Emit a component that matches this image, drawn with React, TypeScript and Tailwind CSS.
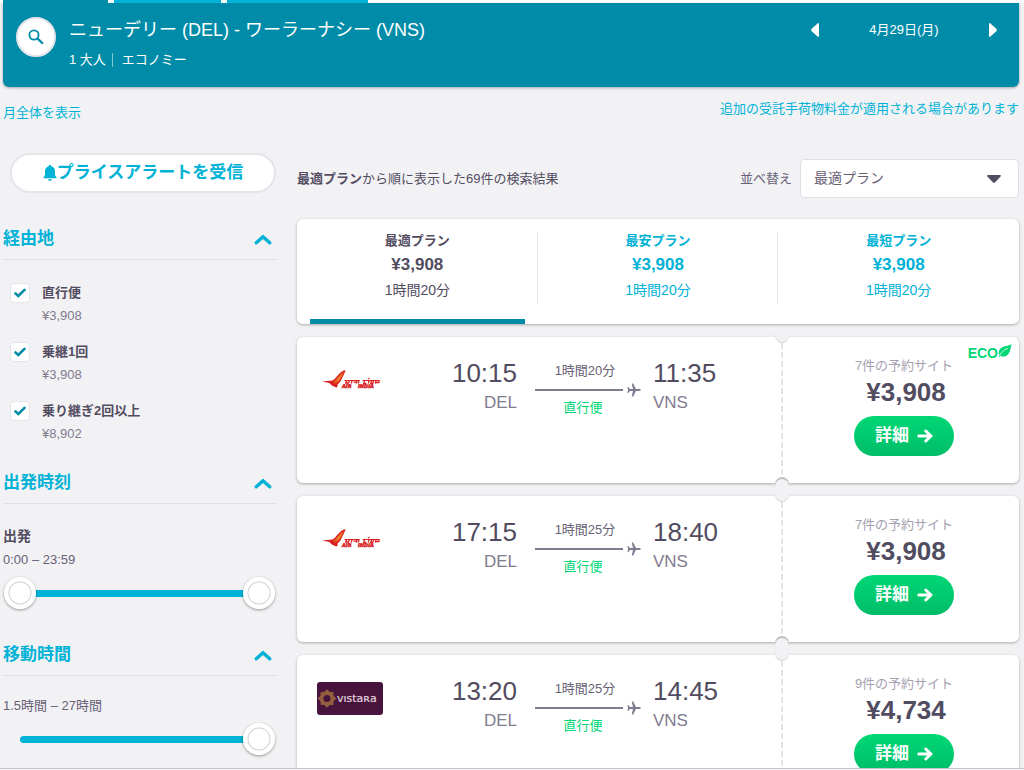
import { useState } from 'react';

const stops = [
  { id: 'direct', label: '直行便', price: '¥3,908' },
  { id: 'one', label: '乗継1回', price: '¥3,908' },
  { id: 'two', label: '乗り継ぎ2回以上', price: '¥8,902' },
];

const plans = [
  { id: 'best', label: '最適プラン', price: '¥3,908', duration: '1時間20分' },
  { id: 'cheapest', label: '最安プラン', price: '¥3,908', duration: '1時間20分' },
  { id: 'fastest', label: '最短プラン', price: '¥3,908', duration: '1時間20分' },
];

const flights = [
  { airline: 'airindia', depart: '10:15', arrive: '11:35', duration: '1時間20分', sites: '7件の予約サイト', price: '¥3,908', eco: true },
  { airline: 'airindia', depart: '17:15', arrive: '18:40', duration: '1時間25分', sites: '7件の予約サイト', price: '¥3,908', eco: false },
  { airline: 'vistara', depart: '13:20', arrive: '14:45', duration: '1時間25分', sites: '9件の予約サイト', price: '¥4,734', eco: false },
];

const rangeClass =
  'block h-8 w-full appearance-none bg-transparent outline-none [&::-webkit-slider-thumb]:pointer-events-auto [&::-webkit-slider-thumb]:h-8 [&::-webkit-slider-thumb]:w-8 [&::-webkit-slider-thumb]:cursor-pointer [&::-webkit-slider-thumb]:appearance-none [&::-webkit-slider-thumb]:rounded-full [&::-webkit-slider-thumb]:bg-[radial-gradient(circle,#ffffff_10px,#d0cdd8_11px,#ffffff_12px)] [&::-webkit-slider-thumb]:shadow-[0_1px_3px_rgba(0,0,0,0.4)]';

function SearchIcon() {
  return (
    <svg viewBox="0 0 16 16" className="h-4 w-4" fill="none" stroke="#008ca8">
      <circle cx="6" cy="6" r="4.6" strokeWidth="1.8" />
      <path d="M9.6 9.6 14.2 14" strokeWidth="2.4" strokeLinecap="round" />
    </svg>
  );
}

function BellIcon() {
  return (
    <svg viewBox="0 0 14 16" className="h-4 w-3.5" fill="currentColor">
      <path d="M7 0c.8 0 1.300.5 1.300 1.200C10.800 1.800 12 3.700 12 6v3.500c0 1 .5 1.700 1.400 2.600.5.500.200 1.100-.4 1.100H1c-.6 0-.9-.6-.4-1.100C1.500 11.200 2 10.500 2 9.500V6c0-2.300 1.200-4.200 3.700-4.800C5.700.5 6.200 0 7 0Z" />
      <path d="M5 14.200h4c-.2 1-1 1.600-2 1.600s-1.800-.6-2-1.600Z" />
    </svg>
  );
}

function ChevronUp() {
  return (
    <svg viewBox="0 0 18 11" className="h-[11px] w-[18px]" fill="none" stroke="#00b2d6" strokeWidth="3.4" strokeLinecap="round" strokeLinejoin="miter">
      <path d="M2.300 8.800 9 2.800l6.700 6" />
    </svg>
  );
}

function PlaneIcon() {
  return (
    <svg viewBox="0 0 14 14" className="h-3.5 w-3.5" fill="#817b8f">
      <path d="M13.800 7c0 .6-.8.9-1.600.9H8.900L6.200 13.600H4.700l1.300-5.700H3L1.600 9.700H.3L1.200 7 .3 4.300h1.300L3 6.100h3L4.700.4h1.500l2.700 5.700h3.300c.8 0 1.600.3 1.600.9Z" />
    </svg>
  );
}

function LeafIcon() {
  return (
    <svg viewBox="0 0 14 14" className="h-3.5 w-3.5">
      <path d="M13.800 0c-1.500 1.300-3.600 1.500-6 2C4 2.900 1.300 4.800.8 7.900c-.2 1.300.1 2.400.5 3.200L.6 12.600l1 .4.700-1.100c3 1.300 6.400.6 8.300-2.200C12.600 6.900 12.500 2.900 13.800 0Z" fill="#00d775" />
      <path d="M1.600 11.800C3 8.500 5.500 6 9.800 4.300" fill="none" stroke="#ffffff" strokeWidth="0.8" />
    </svg>
  );
}

function ArrowIcon() {
  return (
    <svg viewBox="0 0 16 14" className="h-3.5 w-4" fill="none" stroke="currentColor" strokeWidth="3" strokeLinecap="round" strokeLinejoin="round">
      <path d="M1.800 7h12M8.800 2l5.200 5-5.200 5" />
    </svg>
  );
}

function AirIndiaLogo() {
  return (
    <svg viewBox="0 0 66 32" className="h-8 w-[66px]" role="img" aria-label="Air India">
      <defs>
        <linearGradient id="wing" x1="0" y1="1" x2="1" y2="0">
          <stop offset="0" stopColor="#e2401f" />
          <stop offset="0.5" stopColor="#f0842a" />
          <stop offset="1" stopColor="#e2501f" />
        </linearGradient>
      </defs>
      <path d="M28.500 6c-.5 3-3.500 8-4.500 10.500-.8 1.700-2.500 3.200-3.500 4 .3 1.200 0 2-.5 3-2.500-.3-6-2-7.500-4.500L5 17.500l10.500-1C19.500 14.500 22.500 7 28.500 6Z" fill="#d9201f" />
      <path d="M27 7.500c-1 3-3.500 7.500-5 9.500l-4 3-2-2.500C20.500 16 23 9.500 27 7.500Z" fill="url(#wing)" />
      <g fill="none" stroke="#d9201f">
        <path d="M27.500 16.500h15.200M45.500 16.500h17.200" strokeWidth="1" />
        <path d="M29.500 17l-.8 2.500M28 19h3.500l.7-2M35 17l-.8 2.500M36.500 18.200h2.500M40 17l-.8 2.500M42 17l-.8 2.500M47.500 17l-.8 2.500h2.600M51 15l1.500-.8M52 17l-.8 2.500M54.500 17l-.8 2.500h2l.8-2.500M59 17l-.8 2.500M59 18.500h2.800l.5-1.500" strokeWidth="1.300" />
      </g>
      <g fill="#d9201f" stroke="#d9201f" strokeWidth="0.500" fontFamily="'DejaVu Sans', sans-serif" fontWeight="700" fontStyle="italic" fontSize="5">
        <text x="25" y="24">AIR</text>
        <text x="41" y="24">INDIA</text>
      </g>
    </svg>
  );
}

function VistaraLogo() {
  return (
    <svg viewBox="0 0 66 33" className="h-[33px] w-[66px]" role="img" aria-label="Vistara">
      <rect width="66" height="33" rx="3" fill="#47143d" />
      <g fill="none" stroke="#94603f" strokeWidth="1.800">
        <rect x="4.500" y="11" width="11" height="11" />
        <path d="M10 8.500 18 16.500l-8 8-8-8Z" />
        <circle cx="10" cy="16.500" r="4.500" />
      </g>
      <text x="20" y="19.500" fontSize="11" fill="#e3d5df" stroke="#e3d5df" strokeWidth="0.200" fontFamily="'DejaVu Sans', sans-serif">vıstaʀa</text>
    </svg>
  );
}

function SectionHeading({ title }: { title: string }) {
  return (
    <h2 className="border-b border-[#e0dee6]">
      <button type="button" className="flex h-10 w-full items-center justify-between pr-[5px] text-[17px] font-bold text-[#00b2d6]">
        {title}
        <ChevronUp />
      </button>
    </h2>
  );
}

function Sidebar() {
  const [start, setStart] = useState(0);
  const [end, setEnd] = useState(100);
  const [hours, setHours] = useState(100);

  return (
    <aside className="w-[274px] shrink-0">
      <button
        type="button"
        className="ml-[7px] flex h-10 w-[266px] items-center justify-center rounded-full border-2 border-[#e6e4eb] bg-white text-[17px] font-bold text-[#00b2d6]"
      >
        <BellIcon />
        プライスアラートを受信
      </button>

      <div className="mt-[26px]">
        <SectionHeading title="経由地" />
        <ul className="space-y-[11px] pt-[21px] pl-[7px]">
          {stops.map((stop) => (
            <li key={stop.id} className="flex h-12 gap-3">
              <span className="relative mt-0.5 h-5 w-5 shrink-0">
                <input
                  id={stop.id}
                  type="checkbox"
                  defaultChecked
                  className="peer block h-5 w-5 appearance-none rounded border border-[#e6e4eb] bg-white"
                />
                <svg viewBox="0 0 12 10" className="pointer-events-none absolute top-[5px] left-1 hidden h-2.5 w-3 peer-checked:block" fill="none" stroke="#008ca8" strokeWidth="2.600" strokeLinecap="round">
                  <path d="M1.500 5.500 4.300 8 10.500 1.800" />
                </svg>
              </span>
              <label htmlFor={stop.id} className="text-[13px]">
                <span className="block leading-6 font-bold">{stop.label}</span>
                <span className="block leading-[22px] text-[#817b8f]">{stop.price}</span>
              </label>
            </li>
          ))}
        </ul>
      </div>

      <div className="mt-4">
        <SectionHeading title="出発時刻" />
        <p className="pt-5 text-sm leading-6 font-bold">出発</p>
        <p className="text-[13px] leading-6 text-[#686175]">0:00 – 23:59</p>
        <div className="relative mr-0.5 ml-px mt-[5px] flex h-8 items-center">
          <div className="mx-4 h-[7px] flex-1 bg-[#00b2d6]" />
          <input
            type="range"
            aria-label="出発時刻（最小）"
            value={start}
            onChange={(e) => setStart(Math.min(Number(e.target.value), end))}
            className={`pointer-events-none absolute inset-0 ${rangeClass}`}
          />
          <input
            type="range"
            aria-label="出発時刻（最大）"
            value={end}
            onChange={(e) => setEnd(Math.max(Number(e.target.value), start))}
            className={`pointer-events-none absolute inset-0 ${rangeClass}`}
          />
        </div>
      </div>

      <div className="mt-[26px]">
        <SectionHeading title="移動時間" />
        <p className="pt-[18px] text-[13px] leading-6 text-[#686175]">1.5時間 – 27時間</p>
        <div className="relative mr-0.5 ml-px mt-[5px] flex h-8 items-center">
          <div className="mx-4 h-[7px] flex-1 rounded-full bg-[#00b2d6]" />
          <input
            type="range"
            aria-label="移動時間"
            value={hours}
            onChange={(e) => setHours(Number(e.target.value))}
            className={`absolute inset-0 ${rangeClass}`}
          />
        </div>
      </div>
    </aside>
  );
}

function FlightCard({ flight }: { flight: (typeof flights)[number] }) {
  return (
    <li className="relative flex h-[146px] rounded-md bg-white shadow-[0_1px_3px_rgba(0,0,0,0.3)]">
      <div className="flex flex-1 pt-6 pl-5">
        <div className="flex h-[38px] w-[66px] items-center">
          {flight.airline === 'vistara' ? <VistaraLogo /> : <AirIndiaLogo />}
        </div>
        <div className="flex-1 text-right">
          <p className="text-[26px] leading-6">{flight.depart}</p>
          <p className="mt-1.5 text-[17px] leading-6 text-[#817b8f]">DEL</p>
        </div>
        <div className="ml-[18px] w-[106px] text-[13px]">
          <p className="pr-1.5 text-center leading-5 text-[#686175]">{flight.duration}</p>
          <div className="flex h-[18px] items-center justify-between">
            <span className="h-0.5 w-[88px] bg-[#817b8f]" />
            <PlaneIcon />
          </div>
          <p className="pr-2.5 text-center leading-[18px] text-[#00d775]">直行便</p>
        </div>
        <div className="w-[140px] pl-3">
          <p className="text-[26px] leading-6">{flight.arrive}</p>
          <p className="mt-1.5 text-[17px] leading-6 text-[#817b8f]">VNS</p>
        </div>
      </div>

      <div className="relative w-[238px] shrink-0">
        <div className="absolute inset-y-1.5 left-0 w-0.5 bg-[repeating-linear-gradient(to_bottom,#e6e4eb_0px,#e6e4eb_6px,transparent_6px,transparent_9px)]" />
        {/* ticket notches */}
        <div className="absolute -top-2 -left-1.5 h-3.5 w-3.5 rounded-full bg-[#f2f2f5] shadow-[inset_0_-1px_1px_rgba(0,0,0,0.12)]" />
        <div className="absolute -bottom-2 -left-1.5 h-3.5 w-3.5 rounded-full bg-[#f2f2f5] shadow-[inset_0_2px_1px_rgba(0,0,0,0.22)]" />
        {flight.eco && (
          <div className="absolute top-[7px] right-[7px] flex items-start">
            <span className="text-sm leading-[18px] font-bold text-[#00d775]">ECO</span>
            <LeafIcon />
          </div>
        )}
        <div className="flex flex-col items-center pt-[19px] pl-2">
          <p className="text-[13px] leading-5 text-[#a5a0b0]">{flight.sites}</p>
          <p className="mt-0.5 pl-1 text-[26px] leading-7 font-bold">{flight.price}</p>
          <button
            type="button"
            className="mt-2.5 flex h-10 w-[100px] items-center justify-center gap-2 rounded-full bg-linear-to-b from-[#00d775] to-[#00bd68] text-[17px] font-bold text-white"
          >
            詳細
            <ArrowIcon />
          </button>
        </div>
      </div>
    </li>
  );
}

function Results() {
  const [active, setActive] = useState('best');

  return (
    <main className="min-w-0 flex-1 pt-1.5">
      <div className="flex items-center justify-between text-[13px]">
        <p>
          <strong>最適プラン</strong>から順に表示した69件の検索結果
        </p>
        <div className="flex items-center gap-2">
          <label htmlFor="sort" className="text-[#686175]">並べ替え</label>
          <div className="relative">
            <select
              id="sort"
              className="block h-[39px] w-[219px] appearance-none rounded-sm border border-[#e0dee6] bg-white px-[13px] pb-0.5 text-sm text-[#686175]"
            >
              <option>最適プラン</option>
              <option>最安プラン</option>
              <option>最短プラン</option>
            </select>
            <svg viewBox="0 0 14 8" className="pointer-events-none absolute top-4 right-[18px] h-2 w-3.5" fill="#524c61">
              <path d="M1 0h12c.8 0 1.200.8.600 1.400L8.200 7.300c-.7.700-1.700.7-2.400 0L.4 1.400C-.2.800.2 0 1 0Z" />
            </svg>
          </div>
        </div>
      </div>

      <div className="mt-[21px] grid h-[105px] grid-cols-3 rounded-md bg-white shadow-[0_1px_3px_rgba(0,0,0,0.3)]">
        {plans.map((plan, i) => (
          <button
            key={plan.id}
            type="button"
            onClick={() => setActive(plan.id)}
            className={`relative flex flex-col items-center pt-3 ${active === plan.id ? 'text-[#524c61]' : 'text-[#00b2d6]'}`}
          >
            <span className="text-[13px] leading-5 font-bold">{plan.label}</span>
            <span className="text-[17px] leading-7 font-bold">{plan.price}</span>
            <span className="text-sm leading-[22px]">{plan.duration}</span>
            {i < 2 && <span className="absolute top-[13px] right-0 h-[72px] w-px bg-[#e6e4eb]" />}
            {active === plan.id && <span className="absolute inset-x-[13px] bottom-0 h-[5px] bg-[#008ca8]" />}
          </button>
        ))}
      </div>

      <ul className="mt-[13px] space-y-[13px]">
        {flights.map((flight) => (
          <FlightCard key={flight.depart} flight={flight} />
        ))}
      </ul>
    </main>
  );
}

export default function App() {
  return (
    <div className="flex h-screen flex-col bg-[#f2f2f5] font-['Liberation_Sans','Noto_Sans_CJK_JP',sans-serif] text-[#524c61]">
      <div className="min-h-0 flex-1 overflow-hidden">
        <div className="flex h-[3px] gap-1.5 bg-white pl-[3px]">
          <span className="w-[105px] bg-[#008ca8]" />
          <span className="w-[107px] bg-[#00b2d6]" />
          <span className="w-[141px] bg-[#00b2d6]" />
        </div>

        <div className="pr-[5px] pl-[3px]">
          <header className="flex h-[84px] items-start rounded-b-md bg-[#008ca8] pt-3.5 pr-[22px] pl-[13px] text-white shadow-[0_1px_3px_rgba(0,0,0,0.3)]">
            <button type="button" aria-label="検索" className="flex h-10 w-10 items-center justify-center rounded-full border-2 border-[#e6e4eb] bg-white">
              <SearchIcon />
            </button>
            <div className="ml-[13px] flex-1 pt-px">
              <h1 className="text-lg leading-6">ニューデリー (DEL) - ワーラーナシー (VNS)</h1>
              <p className="mt-2 flex items-center text-[13px] leading-5">
                1 大人
                <span className="mr-[9px] ml-1.5 h-3.5 w-px bg-white/50" />
                エコノミー
              </p>
            </div>
            <div className="flex h-[26px] w-[186px] items-center justify-between text-[13px]">
              <button type="button" aria-label="前の日">
                <svg viewBox="0 0 8 14" className="h-3.5 w-2" fill="currentColor">
                  <path d="M8 1v12c0 .8-.8 1.200-1.400.6L.7 8.200c-.7-.7-.7-1.700 0-2.400L6.600.4C7.200-.2 8 .2 8 1Z" />
                </svg>
              </button>
              <span>4月29日(月)</span>
              <button type="button" aria-label="次の日">
                <svg viewBox="0 0 8 14" className="h-3.5 w-2" fill="currentColor">
                  <path d="M0 1v12c0 .8.8 1.200 1.400.6l5.900-5.400c.7-.7.7-1.700 0-2.400L1.400.4C.8-.2 0 .2 0 1Z" />
                </svg>
              </button>
            </div>
          </header>

          <div className="flex h-[66px] items-start justify-between pt-3 text-[13px] leading-5 text-[#00b2d6]">
            <a href="#month" className="pt-1">月全体を表示</a>
            <a href="#baggage">追加の受託手荷物料金が適用される場合があります</a>
          </div>

          <div className="flex gap-5">
            <Sidebar />
            <Results />
          </div>
        </div>
      </div>
      <div className="h-0.5 border-t border-[#c8c8cc] bg-[#f2f2f5]" />
    </div>
  );
}
